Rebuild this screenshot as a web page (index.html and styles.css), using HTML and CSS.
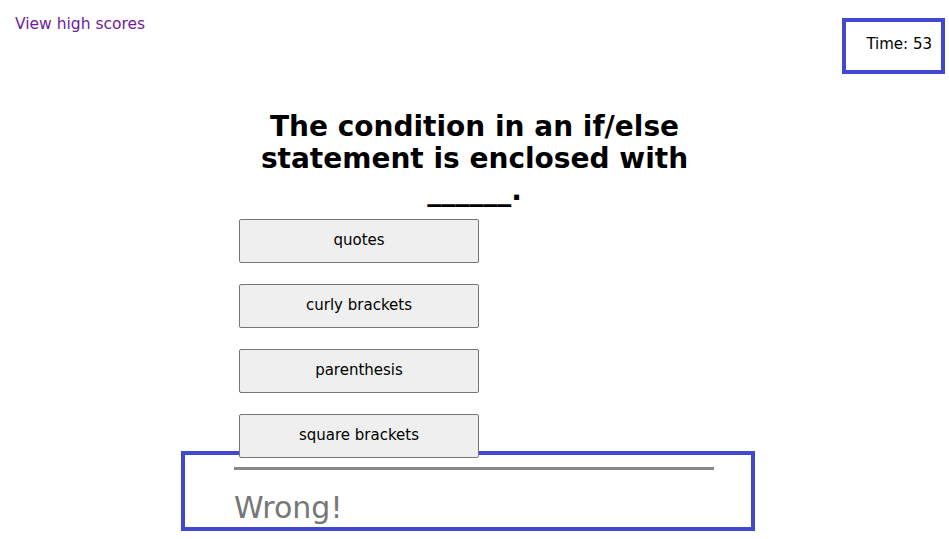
FILE: index.html
```html
<!DOCTYPE html>
<html lang="en">
<head>
<meta charset="utf-8">
<title>Code Quiz</title>
<link rel="stylesheet" href="styles.css">
</head>
<body>
<header class="top-bar">
  <a class="scores-link" href="#">View high scores</a>
  <div class="timer">Time: 53</div>
</header>
<main class="quiz">
  <h1 class="question">The condition in an if/else statement is enclosed with ______.</h1>
  <div class="choices">
    <button class="choice">quotes</button>
    <button class="choice">curly brackets</button>
    <button class="choice">parenthesis</button>
    <button class="choice">square brackets</button>
  </div>
  <section class="feedback">
    <hr class="divider">
    <p class="result">Wrong!</p>
  </section>
</main>
</body>
</html>
```
FILE: styles.css
```css
html, body {
  margin: 0;
  padding: 0;
  background: #ffffff;
}

body {
  font-family: "DejaVu Sans", Verdana, sans-serif;
  color: #000;
}

.top-bar {
  display: flex;
  justify-content: space-between;
  align-items: flex-start;
  padding: 0 4px 0 15px;
}

.scores-link {
  margin-top: 15px;
  font-size: 15.5px;
  line-height: 18px;
  color: #6c1c9c;
  text-decoration: none;
}

.timer {
  margin-top: 18px;
  width: 103px;
  height: 56px;
  box-sizing: border-box;
  border: 4px solid #4248cf;
  padding: 13px 9px 0 0;
  text-align: right;
  font-size: 15px;
  line-height: 18px;
}

.quiz {
  width: 480px;
  margin: 0 auto;
}

.question {
  max-width: 480px;
  margin: 37px auto 0;
  text-align: center;
  font-size: 28px;
  line-height: 32px;
  font-weight: bold;
}

.choices {
  display: flex;
  flex-direction: column;
  align-items: flex-start;
  gap: 21px;
  margin-top: 12px;
  padding-left: 4.5px;
}

.choice {
  width: 240px;
  height: 44px;
  background: #efefef;
  border: 1px solid #767676;
  border-radius: 2px;
  font-family: "DejaVu Sans", Verdana, sans-serif;
  font-size: 15px;
  color: #000;
  padding: 0 0 2px;
}

.feedback {
  width: 574px;
  box-sizing: border-box;
  margin: -7px 0 0 -53.5px;
  border: 4px solid #4248cf;
  padding: 12px 37px 0 49px;
  height: 80px;
}

.divider {
  margin: 0;
  border: none;
  height: 3px;
  background: #888888;
}

.result {
  margin: 20px 0 0;
  font-size: 30px;
  line-height: 36px;
  color: #777777;
}
```
